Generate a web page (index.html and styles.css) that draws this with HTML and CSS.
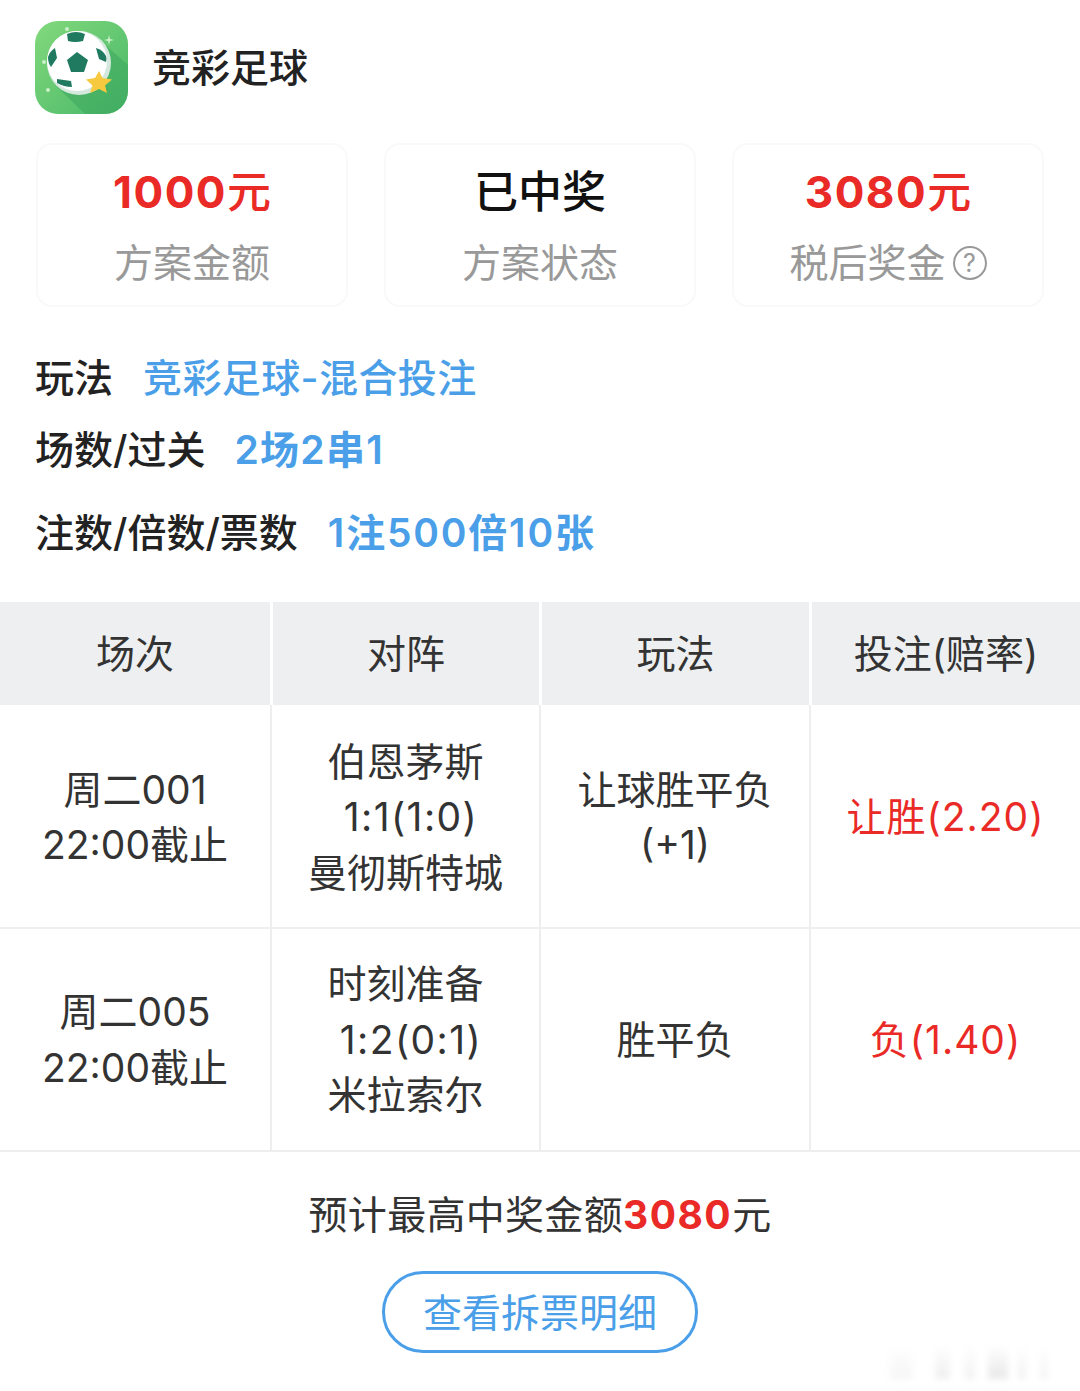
FILE: index.html
```html
<!DOCTYPE html>
<html lang="zh-CN">
<head>
  <meta charset="UTF-8" />
  <meta name="viewport" content="width=device-width, initial-scale=1.0"/>
  <title>竞彩足球</title>
  <link rel="stylesheet" href="styles.css">
</head>
<body>

  <header class="top">
    <svg class="logo" viewBox="0 0 93 93" width="93" height="93">
      <defs>
        <linearGradient id="bg" x1="0" y1="0" x2="1" y2="1">
          <stop offset="0" stop-color="#82d97c"/>
          <stop offset="1" stop-color="#48b768"/>
        </linearGradient>
      </defs>
      <rect width="93" height="93" rx="23" fill="url(#bg)"/>
      <path d="M66 20 L93 44 V70 A23 23 0 0 1 70 93 H50 L20 64 Z" fill="#3da85f" opacity=".6"/>
      <circle cx="44" cy="42" r="32" fill="#d5e8de"/>
      <circle cx="42" cy="40" r="30" fill="#fff"/>
      <path d="M42 31 L53 39 L49 51 L36 51 L32 39 Z" fill="#1f7a60"/>
      <path d="M32 13 Q41 9 50 13 L48 20 Q40 22 33 20 Z" fill="#1f7a60"/>
      <path d="M13 36 Q15 30 20 27 L22 37 L16 46 Q13 42 13 36 Z" fill="#1f7a60"/>
      <path d="M61 27 Q68 29 71 35 Q72 38 71 41 L64 38 Z" fill="#1f7a60"/>
      <path d="M22 58 L36 60 L37 66 Q29 66 22 62 Z" fill="#1f7a60"/>
      <path d="M64 50 L67.5 57 L77 58.5 L70 64.5 L72 72 L64 68 L55 72 L57.5 64.5 L51 58.5 L60 57 Z" fill="#f7c93e"/>
      <circle cx="32" cy="8" r="2" fill="#c9f0c8"/>
      <circle cx="9" cy="41" r="2" fill="#c9f0c8"/>
      <circle cx="13" cy="69" r="2" fill="#c9f0c8"/>
      <path d="M74 14 L75 18 L79 19 L75 20 L74 24 L73 20 L69 19 L73 18 Z" fill="#c9f0c8"/>
    </svg>
    <h1 class="app-name">竞彩足球</h1>
  </header>

  <section class="summary">
    <div class="card">
      <div class="card-value red">1000<span class="unit">元</span></div>
      <div class="card-label">方案金额</div>
    </div>
    <div class="card">
      <div class="card-value">已中奖</div>
      <div class="card-label">方案状态</div>
    </div>
    <div class="card">
      <div class="card-value red">3080<span class="unit">元</span></div>
      <div class="card-label">税后奖金<span class="help">?</span></div>
    </div>
  </section>

  <section class="info">
    <div class="info-row row-play"><strong>玩法</strong><span class="blue">竞彩足球-混合投注</span></div>
    <div class="info-row row-pass"><strong>场数/过关</strong><span class="blue num">2场2串1</span></div>
    <div class="info-row row-bet"><strong>注数/倍数/票数</strong><span class="blue num">1注500倍10张</span></div>
  </section>

  <section class="table">
    <div class="th">场次</div>
    <div class="th">对阵</div>
    <div class="th">玩法</div>
    <div class="th">投注(赔率)</div>

    <div class="td"><div>周二001<br>22:00截止</div></div>
    <div class="td"><div>伯恩茅斯<br><span class="score">1:1(1:0)</span><br>曼彻斯特城</div></div>
    <div class="td"><div>让球胜平负<br>(+1)</div></div>
    <div class="td red"><div>让胜(2.20)</div></div>

    <div class="td"><div>周二005<br>22:00截止</div></div>
    <div class="td"><div>时刻准备<br><span class="score">1:2(0:1)</span><br>米拉索尔</div></div>
    <div class="td"><div>胜平负</div></div>
    <div class="td red"><div>负(1.40)</div></div>
  </section>

  <p class="total">预计最高中奖金额<b class="red">3080</b>元</p>

  <div class="actions">
    <button class="detail-btn">查看拆票明细</button>
  </div>

  <div class="watermark">
    <i class="w1"></i><i class="w2"></i><i class="w3"></i><i class="w4"></i><i class="w5"></i><i class="w6"></i>
  </div>

</body>
</html>
```

FILE: styles.css
```css
* {
  box-sizing: border-box;
}
body {
  margin: 0;
  background: #fff;
  color: #222;
  font-family: "Inter", "Noto Sans CJK SC", sans-serif;
  font-size: 39px;
  position: relative;
  height: 1391px;
  overflow: hidden;
}
.red {
  color: #ea2a26;
}
.blue {
  color: #4a9fe8;
}

/* header */
.top {
  display: flex;
  align-items: center;
  gap: 24px;
  padding: 21px 35px 0;
}
.logo {
  display: block;
}
.app-name {
  margin: 0;
  font-size: 39px;
  font-weight: 500;
  line-height: 93px;
}

/* three boxes */
.summary {
  display: grid;
  grid-template-columns: repeat(3, 312px);
  gap: 36px;
  padding: 29px 36px 0;
}
.card {
  height: 164px;
  border: 2px solid #f9f9f9;
  border-radius: 16px;
  text-align: center;
  padding-top: 16px;
}
.card-value {
  font-size: 44px;
  line-height: 62px;
  font-weight: 500;
  color: #111;
}
.card-value.red {
  color: #ea2a26;
  font-weight: 700;
  letter-spacing: 1.5px;
}
.unit {
  font-weight: 500;
  letter-spacing: 0;
}
.card-label {
  margin-top: 10px;
  line-height: 60px;
  color: #999;
  display: flex;
  justify-content: center;
  align-items: center;
}
.help {
  width: 34px;
  height: 34px;
  margin-left: 7px;
  border: 2px solid #999;
  border-radius: 50%;
  font-size: 25px;
  line-height: 30px;
  text-align: center;
}

/* play info */
.info {
  padding: 0 35px;
}
.info-row {
  display: flex;
  gap: 30px;
  line-height: 56px;
}
.info-row strong {
  font-weight: 500;
}
.info-row .blue {
  font-weight: 500;
  letter-spacing: .4px;
}
.row-play {
  margin-top: 43px;
}
.row-pass {
  margin-top: 16px;
  gap: 29px;
}
.row-bet {
  margin-top: 27px;
}
.info-row .num {
  font-weight: 600;
  letter-spacing: 1.3px;
}
.row-bet .num {
  letter-spacing: 1.8px;
}

/* table */
.table {
  display: grid;
  grid-template-columns: 270px 269px 270px 271px;
  grid-template-rows: 103px 224px 221px;
  margin-top: 41px;
  border-bottom: 2px solid #eee;
}
.th {
  display: flex;
  align-items: center;
  justify-content: center;
  background: #eeeff0;
  border-left: 3px solid #fff;
  padding-bottom: 5px;
  color: #333;
}
.th:first-child {
  border-left: 0;
}
.td {
  display: flex;
  align-items: center;
  justify-content: center;
  text-align: center;
  line-height: 55.5px;
  color: #333;
  border-left: 2px solid #eee;
  border-bottom: 2px solid #eee;
}
.td:nth-child(4n+1) {
  border-left: 0;
}
.td:nth-child(-n+8) {
  padding-top: 2px;
}
.td.red {
  color: #ea2a26;
  letter-spacing: 1px;
}
.td:nth-last-child(-n+4) {
  border-bottom: 0;
}
.score {
  letter-spacing: 1.4px;
  padding-left: 11px;
}

/* bottom */
.total {
  margin: 31px 0 0;
  text-align: center;
  line-height: 64px;
  color: #333;
  letter-spacing: .3px;
}
.total b {
  font-weight: 700;
  letter-spacing: 1.5px;
}
.actions {
  display: flex;
  justify-content: center;
  margin-top: 24px;
}
.detail-btn {
  width: 316px;
  height: 82px;
  padding: 0 0 5px;
  background: #fff;
  border: 3px solid #4a9fe8;
  border-radius: 41px;
  color: #4a9fe8;
  font-family: inherit;
  font-size: 39px;
}

/* blurred stamp in the corner of the screenshot */
.watermark {
  position: absolute;
  left: 890px;
  top: 1345px;
  display: flex;
}
.watermark i {
  display: block;
  height: 34px;
  background: linear-gradient(#fff, #e8e8e8);
  filter: blur(3px);
}
.w1 { width: 23px; opacity: .4; }
.w2 { width: 15px; margin-left: 22px; opacity: .7; }
.w3 { width: 10px; margin-left: 15px; opacity: .6; }
.w4 { width: 20px; margin-left: 13px; opacity: 1; }
.w5 { width: 8px; margin-left: 10px; opacity: .6; }
.w6 { width: 8px; margin-left: 14px; opacity: .5; }
```
